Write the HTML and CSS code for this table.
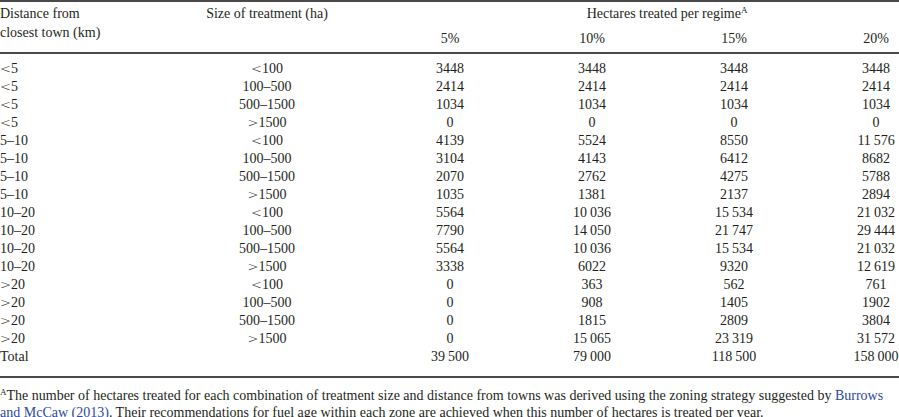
FILE: index.html
```html
<!DOCTYPE html>
<html>
<head>
<meta charset="utf-8">
<link rel="stylesheet" href="styles.css">
</head>
<body>
<table class="data">
<colgroup>
<col class="c-dist"><col class="c-size"><col class="c-num"><col class="c-num"><col class="c-num"><col class="c-last">
</colgroup>
<thead>
<tr class="h1">
<th rowspan="2" class="left">Distance from<br>closest town (km)</th>
<th rowspan="2" class="size">Size of treatment (ha)</th>
<th colspan="4" class="span">Hectares treated per regime<sup>A</sup></th>
</tr>
<tr class="h2">
<th>5%</th><th>10%</th><th>15%</th><th class="last">20%</th>
</tr>
</thead>
<tbody>
<tr><td class="left"><span class="op">&lt;</span>5</td><td class="size"><span class="op">&lt;</span>100</td><td>3448</td><td>3448</td><td>3448</td><td class="last">3448</td></tr>
<tr><td class="left"><span class="op">&lt;</span>5</td><td class="size">100–500</td><td>2414</td><td>2414</td><td>2414</td><td class="last">2414</td></tr>
<tr><td class="left"><span class="op">&lt;</span>5</td><td class="size">500–1500</td><td>1034</td><td>1034</td><td>1034</td><td class="last">1034</td></tr>
<tr><td class="left"><span class="op">&lt;</span>5</td><td class="size"><span class="op">&gt;</span>1500</td><td>0</td><td>0</td><td>0</td><td class="last">0</td></tr>
<tr><td class="left">5–10</td><td class="size"><span class="op">&lt;</span>100</td><td>4139</td><td>5524</td><td>8550</td><td class="last">11&thinsp;576</td></tr>
<tr><td class="left">5–10</td><td class="size">100–500</td><td>3104</td><td>4143</td><td>6412</td><td class="last">8682</td></tr>
<tr><td class="left">5–10</td><td class="size">500–1500</td><td>2070</td><td>2762</td><td>4275</td><td class="last">5788</td></tr>
<tr><td class="left">5–10</td><td class="size"><span class="op">&gt;</span>1500</td><td>1035</td><td>1381</td><td>2137</td><td class="last">2894</td></tr>
<tr><td class="left">10–20</td><td class="size"><span class="op">&lt;</span>100</td><td>5564</td><td>10&thinsp;036</td><td>15&thinsp;534</td><td class="last">21&thinsp;032</td></tr>
<tr><td class="left">10–20</td><td class="size">100–500</td><td>7790</td><td>14&thinsp;050</td><td>21&thinsp;747</td><td class="last">29&thinsp;444</td></tr>
<tr><td class="left">10–20</td><td class="size">500–1500</td><td>5564</td><td>10&thinsp;036</td><td>15&thinsp;534</td><td class="last">21&thinsp;032</td></tr>
<tr><td class="left">10–20</td><td class="size"><span class="op">&gt;</span>1500</td><td>3338</td><td>6022</td><td>9320</td><td class="last">12&thinsp;619</td></tr>
<tr><td class="left"><span class="op">&gt;</span>20</td><td class="size"><span class="op">&lt;</span>100</td><td>0</td><td>363</td><td>562</td><td class="last">761</td></tr>
<tr><td class="left"><span class="op">&gt;</span>20</td><td class="size">100–500</td><td>0</td><td>908</td><td>1405</td><td class="last">1902</td></tr>
<tr><td class="left"><span class="op">&gt;</span>20</td><td class="size">500–1500</td><td>0</td><td>1815</td><td>2809</td><td class="last">3804</td></tr>
<tr><td class="left"><span class="op">&gt;</span>20</td><td class="size"><span class="op">&gt;</span>1500</td><td>0</td><td>15&thinsp;065</td><td>23&thinsp;319</td><td class="last">31&thinsp;572</td></tr>
<tr class="total"><td class="left">Total</td><td class="size"></td><td>39&thinsp;500</td><td>79&thinsp;000</td><td>118&thinsp;500</td><td class="last">158&thinsp;000</td></tr>
</tbody>
</table>
<p class="note"><sup>A</sup>The number of hectares treated for each combination of treatment size and distance from towns was derived using the zoning strategy suggested by <a class="ref" href="#">Burrows and McCaw (2013)</a>. Their recommendations for fuel age within each zone are achieved when this number of hectares is treated per year.</p>
</body>
</html>
```

FILE: styles.css
```css
html, body {
  margin: 0;
  padding: 0;
  background: #ffffff;
}
body {
  font-family: "Liberation Serif", "Times New Roman", serif;
  font-size: 14px;
  color: #231f20;
}
.data {
  width: 899px;
  border-collapse: collapse;
  table-layout: fixed;
  border-top: 2px solid #4a4a4a;
  border-bottom: 2px solid #4a4a4a;
}
.c-dist { width: 170px; }
.c-size { width: 209px; }
.c-num { width: 142px; }
.c-last { width: 94px; }
th, td {
  padding: 0;
  font-weight: normal;
  text-align: center;
  white-space: nowrap;
  line-height: 18px;
}
th.left, td.left {
  text-align: left;
}
th.size, td.size {
  padding-right: 15px;
}
th.last, td.last {
  padding-left: 48px;
}
thead th {
  vertical-align: top;
  line-height: 19px;
}
.h1 th {
  padding-top: 2px;
}
.h1 th.span {
  padding-bottom: 6px;
  padding-left: 56px;
}
.h2 th {
  padding-bottom: 4px;
}
thead {
  border-bottom: 2px solid #4a4a4a;
}
tbody tr:first-child td {
  padding-top: 6px;
}
tbody tr.total td {
  padding-bottom: 10px;
}
.op {
  font-family: "DejaVu Sans", sans-serif;
  font-weight: 200;
  font-size: 13px;
}
sup {
  font-size: 9px;
  line-height: 0;
  vertical-align: 5px;
}
.note {
  margin: 9px 0 0 0;
  line-height: 17px;
}
.ref {
  color: #2b4a9c;
  text-decoration: none;
}
```
